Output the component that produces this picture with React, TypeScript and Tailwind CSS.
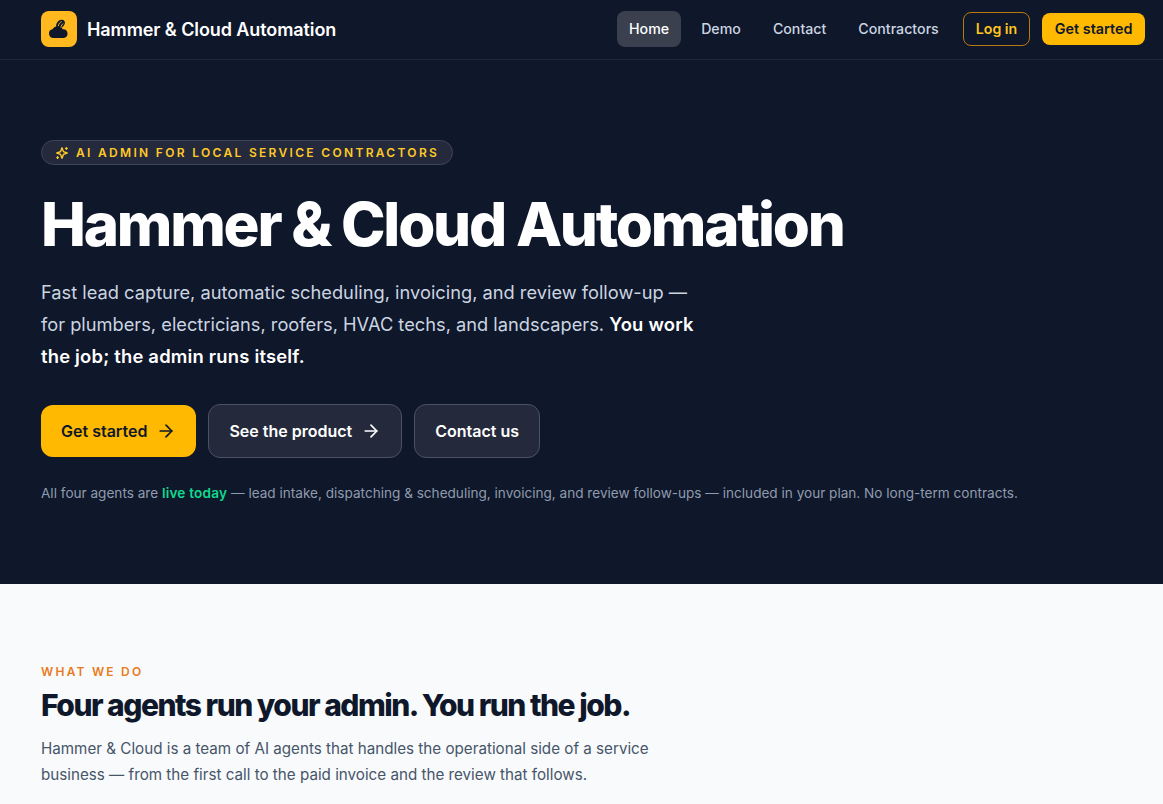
import { ArrowRight } from "lucide-react";

const navLinks = ["Demo", "Contact", "Contractors"];

const App = () => {
  return (
    <div className="bg-[#f8fafc] font-['Inter',sans-serif] h-[804px] overflow-hidden">
      {/* Nav */}
      <header className="h-[60px] bg-[#0f172a] border-b border-[#1f2937] flex items-center pl-[41px] pr-[18px] pb-px">
        <div className="flex items-center gap-[10px]">
          <div className="w-9 h-9 rounded-lg bg-[#ffb91f] flex items-center justify-center">
            <svg width="22" height="22" viewBox="0 0 22 22" fill="#0f172a">
              <path d="M5.5 20a4.4 4.4 0 0 1-1-8.7C6 8.6 9 7.6 11.5 8.6c1.6.6 2.7 1.6 3.3 2.7A4.4 4.4 0 0 1 16 20H5.5Z" />
              <ellipse cx="12.5" cy="6" rx="5" ry="3.6" transform="rotate(-45 12.5 6)" />
              <path d="M10.4 7.6c.3-1.9 1.4-3.2 3-3.8M13 9c.2-1.5.8-2.5 2-3.2" stroke="#ffb91f" strokeWidth="1" strokeLinecap="round" fill="none" />
            </svg>
          </div>
          <span className="text-[18px] font-semibold text-white tracking-[-0.005em]">Hammer &amp; Cloud Automation</span>
        </div>
        <nav className="ml-auto flex items-center text-[14.2px] font-medium">
          <a className="h-9 px-3 rounded-lg bg-[#3a404e] text-white flex items-center">Home</a>
          <div className="flex items-center gap-2 ml-2">
            {navLinks.map((link) => (
              <a key={link} className="h-9 px-3 flex items-center text-[#cbd5e1]">{link}</a>
            ))}
          </div>
          <a className="ml-3 h-[34px] px-3 rounded-lg border border-[#b97a0d] text-[#ffc51f] font-semibold flex items-center">Log in</a>
          <a className="ml-3 h-8 px-[12.5px] rounded-lg bg-[#ffb900] text-[#0f172a] text-[14.4px] font-semibold flex items-center">Get started</a>
        </nav>
      </header>

      {/* Hero */}
      <section className="h-[524px] bg-[#0f172a] pt-[80px] pl-[41px]">
        <div className="inline-flex items-center gap-[7px] h-[25px] pl-[13px] pr-[13px] rounded-full border border-[#3d4454] bg-[#242a3c] text-[#ffc927] text-xs font-semibold tracking-[0.193em]">
          <svg width="14" height="14" viewBox="0 0 14 14" fill="none" stroke="currentColor" strokeWidth="1.4" strokeLinecap="round" strokeLinejoin="round">
            <path d="M7 1.8 8.4 5.6 12.2 7 8.4 8.4 7 12.2 5.6 8.4 1.8 7 5.6 5.6Z" />
            <path d="M11.4 1.6v1.6M10.6 2.4h1.6M2.6 10.8v1.6M1.8 11.6h1.6" />
          </svg>
          AI ADMIN FOR LOCAL SERVICE CONTRACTORS
        </div>
        <h1 className="mt-[22px] text-[60px] leading-[72px] font-extrabold text-white tracking-[-0.037em]">Hammer &amp; Cloud Automation</h1>
        <p className="mt-4 w-[672px] text-[18.26px] leading-8 text-[#cbd5e1]">
          Fast lead capture, automatic scheduling, invoicing, and review follow-up — for plumbers, electricians, roofers, HVAC techs, and landscapers. <strong className="font-semibold text-[18.4px] tracking-[0.2px] text-white">You work the job; the admin runs itself.</strong>
        </p>
        <div className="mt-8 flex items-center gap-3">
          <a className="h-[52px] px-5 rounded-xl bg-[#ffb900] text-[#0f172a] font-semibold flex items-center gap-[9px]">
            Get started <ArrowRight className="w-5 h-5" />
          </a>
          <a className="h-[54px] px-5 rounded-xl border border-[#4b5162] bg-[#242a3c] text-white font-semibold flex items-center gap-[9px]">
            See the product <ArrowRight className="w-5 h-5" />
          </a>
          <a className="h-[54px] px-5 rounded-xl border border-[#4b5162] bg-[#242a3c] text-white font-semibold flex items-center">Contact us</a>
        </div>
        <p className="mt-[25px] text-[13.58px] leading-5 text-[#8f9bae]">
          All four agents are <span className="font-semibold tracking-[0.2px] text-[#10d98f]">live today</span> — lead intake, dispatching &amp; scheduling, invoicing, and review follow-ups — included in your plan. No long-term contracts.
        </p>
      </section>

      {/* What we do */}
      <section className="pt-[80px] pl-[41px]">
        <div className="text-xs font-semibold tracking-[0.185em] text-[#ea7a1c]">WHAT WE DO</div>
        <h2 className="mt-[7px] text-[30px] leading-9 font-extrabold tracking-[-0.05em] text-[#0f172a]">Four agents run your admin. You run the job.</h2>
        <p className="mt-[13px] w-[640px] text-[15.2px] leading-[26px] text-[#475569]">
          Hammer &amp; Cloud is a team of AI agents that handles the operational side of a service business — from the first call to the paid invoice and the review that follows.
        </p>
      </section>
    </div>
  );
};

export default App;
